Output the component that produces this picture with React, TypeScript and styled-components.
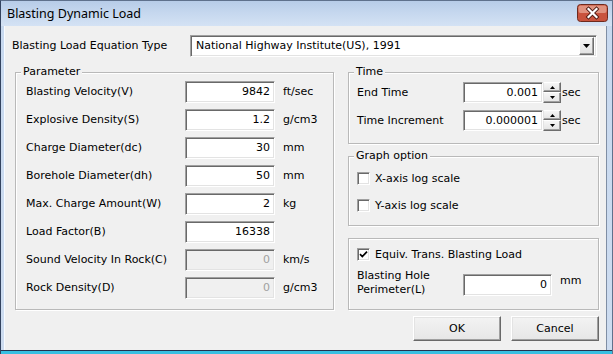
import React from "react";
import styled, { createGlobalStyle } from "styled-components";

const Global = createGlobalStyle`
  html, body { margin: 0; padding: 0; background: #ffffff; }
  body { width: 613px; height: 354px; overflow: hidden; }
  * { box-sizing: border-box; }
`;

const UI_FONT = `"DejaVu Sans", Tahoma, sans-serif`;

const Window = styled.div`
  width: 613px;
  height: 354px;
  display: flex;
  flex-direction: column;
  background: linear-gradient(#bcd0ea 0px, #c8d9ef 30px, #cddcf0 100%);
  border-top: 1px solid #5f718c;
  border-left: 1px solid #33435f;
  border-right: 1px solid #5f718c;
  font-family: ${UI_FONT};
  font-size: 11px;
  color: #000;
`;

const TitleBar = styled.div`
  height: 25px;
  display: flex;
  align-items: flex-start;
  background: linear-gradient(#b7cce8 0%, #c5d7ee 45%, #d4e2f4 100%);
`;

const Title = styled.div`
  flex: 1;
  margin: 5px 0 0 6px;
  font-family: "Noto Sans", "DejaVu Sans", sans-serif;
  font-size: 12.5px;
  line-height: 16px;
  color: #000;
`;

const CloseButton = styled.div`
  flex: none;
  width: 31px;
  height: 18px;
  margin: 3px 4px 0 0;
  display: block;
  line-height: 0;
`;

const Client = styled.div`
  flex: 1;
  margin: 0 5px 0 3px;
  background: #f0f0f0;
  border-left: 1px solid #f8fbff;
  border-right: 1px solid #7f8ea4;
  padding: 9px 7px 0 7px;
  display: flex;
  flex-direction: column;
`;

const BottomEdge = styled.div`
  height: 4px;
  border-top: 1px solid #24334f;
  background: #38bfe1;
`;

const TopRow = styled.div`
  display: grid;
  grid-template-columns: 178px 407px;
  align-items: center;
  height: 22px;
`;

const Label = styled.span`
  white-space: nowrap;
  line-height: 14px;
`;

const Combo = styled.div`
  height: 22px;
  display: flex;
  align-items: center;
  background: #fff;
  border: 1px solid;
  border-color: #a0a0a0 #ffffff #ffffff #a0a0a0;
  box-shadow: inset 1px 1px 0 #696969, inset -1px -1px 0 #e3e3e3;
  padding: 0 2px 0 5px;
`;

const ComboText = styled.span`
  flex: 1;
  line-height: 14px;
  white-space: nowrap;
`;

const ComboArrow = styled.div`
  width: 15px;
  height: 18px;
  display: flex;
  align-items: center;
  justify-content: center;
  background: linear-gradient(#f4f4f4, #e2e2e2);
  border: 1px solid;
  border-color: #ffffff #6d6d6d #6d6d6d #ffffff;
  box-shadow: inset -1px -1px 0 #a0a0a0;
`;

const Main = styled.div`
  margin-top: 15px;
  padding-left: 3px;
  display: flex;
  gap: 14px;
  align-items: flex-start;
`;

const Group = styled.div<{ $w?: number; $h: number }>`
  position: relative;
  width: ${(p) => (p.$w ? `${p.$w}px` : "100%")};
  height: ${(p) => p.$h}px;
  border: 1px solid #b9b9b9;
  box-shadow: inset 1px 1px 0 #ffffff, 1px 1px 0 #ffffff;
`;

const Legend = styled.span`
  position: absolute;
  top: -8px;
  left: 5px;
  padding: 0 2px;
  background: #f0f0f0;
  line-height: 14px;
  white-space: nowrap;
`;

const ParamList = styled.div`
  display: flex;
  flex-direction: column;
  gap: 6px;
  padding: 8px 0 0 10px;
`;

const ParamRow = styled.div`
  display: grid;
  grid-template-columns: 159px 90px auto;
  align-items: center;
  height: 22px;
`;

const Unit = styled.span<{ $ml?: number }>`
  margin-left: ${(p) => p.$ml ?? 8}px;
  line-height: 14px;
  white-space: nowrap;
`;

const Edit = styled.div<{ $w?: number; $h?: number; $disabled?: boolean }>`
  width: ${(p) => p.$w ?? 90}px;
  height: ${(p) => p.$h ?? 22}px;
  background: ${(p) => (p.$disabled ? "#f0f0f0" : "#ffffff")};
  color: ${(p) => (p.$disabled ? "#a0a0a0" : "#000")};
  border: 1px solid;
  border-color: #a0a0a0 #ffffff #ffffff #a0a0a0;
  box-shadow: inset 1px 1px 0 #696969, inset -1px -1px 0 #e3e3e3;
  padding-right: 4px;
  display: flex;
  align-items: center;
  justify-content: flex-end;
  line-height: 14px;
`;

const RightColumn = styled.div`
  width: 251px;
  display: flex;
  flex-direction: column;
  gap: 12px;
`;

const TimeList = styled.div`
  display: flex;
  flex-direction: column;
  gap: 7px;
  padding: 9px 0 0 8px;
`;

const TimeRow = styled.div`
  display: grid;
  grid-template-columns: 106px 80px 18px auto;
  align-items: center;
  height: 21px;
`;

const Spinner = styled.div`
  width: 18px;
  height: 21px;
  display: flex;
  flex-direction: column;
`;

const SpinButton = styled.div<{ $h: number }>`
  height: ${(p) => p.$h}px;
  display: flex;
  align-items: center;
  justify-content: center;
  background: linear-gradient(#f6f6f6, #e4e4e4);
  border: 1px solid;
  border-color: #ffffff #6d6d6d #6d6d6d #e3e3e3;
  box-shadow: inset -1px -1px 0 #a0a0a0;
`;

const CheckList = styled.div`
  display: flex;
  flex-direction: column;
  gap: 14px;
  padding: 15px 0 0 8px;
`;

const CheckRow = styled.div`
  display: flex;
  align-items: center;
  gap: 5px;
  height: 13px;
`;

const CheckBox = styled.div`
  width: 13px;
  height: 13px;
  background: #fff;
  border: 1px solid;
  border-color: #a0a0a0 #ffffff #ffffff #a0a0a0;
  box-shadow: inset 1px 1px 0 #696969, inset -1px -1px 0 #e3e3e3;
  display: flex;
  align-items: center;
  justify-content: center;
`;

const EquivBody = styled.div`
  display: flex;
  flex-direction: column;
  padding: 9px 0 0 8px;
`;

const PerimeterRow = styled.div`
  display: flex;
  align-items: flex-start;
  margin-top: 8px;
`;

const TwoLineLabel = styled.div`
  width: 106px;
  line-height: 14px;
`;

const EditSlot = styled.div`
  margin-top: 5px;
`;

const UnitSlot = styled.div`
  margin-top: 5px;
`;

const ButtonRow = styled.div`
  display: flex;
  justify-content: flex-end;
  gap: 10px;
  margin-top: -6px;
`;

const Button = styled.div`
  width: 88px;
  height: 25px;
  display: flex;
  align-items: center;
  justify-content: center;
  background: linear-gradient(#f3f3f3, #e6e6e6);
  border: 1px solid;
  border-color: #ffffff #696969 #696969 #ffffff;
  box-shadow: inset -1px -1px 0 #a0a0a0, inset 1px 1px 0 #e3e3e3;
  line-height: 14px;
`;

const params: { label: string; value: string; unit?: string; disabled?: boolean }[] = [
  { label: "Blasting Velocity(V)", value: "9842", unit: "ft/sec" },
  { label: "Explosive Density(S)", value: "1.2", unit: "g/cm3" },
  { label: "Charge Diameter(dc)", value: "30", unit: "mm" },
  { label: "Borehole Diameter(dh)", value: "50", unit: "mm" },
  { label: "Max. Charge Amount(W)", value: "2", unit: "kg" },
  { label: "Load Factor(B)", value: "16338" },
  { label: "Sound Velocity In Rock(C)", value: "0", unit: "km/s", disabled: true },
  { label: "Rock Density(D)", value: "0", unit: "g/cm3", disabled: true },
];

const times = [
  { label: "End Time", value: "0.001" },
  { label: "Time Increment", value: "0.000001" },
];

const CloseIcon = () => (
  <svg width="31" height="18" viewBox="0 0 31 18">
    <rect x="0.5" y="0.5" width="30" height="17" rx="3" ry="3" fill="#c9533d" stroke="#6e2a1e" />
    <rect x="1.5" y="1.5" width="28" height="7.5" rx="2" ry="2" fill="#e0927f" />
    <path d="M11.5 5 L19.5 13 M19.5 5 L11.5 13" stroke="#4e1a12" strokeWidth="4" strokeLinecap="square" />
    <path d="M11.5 5 L19.5 13 M19.5 5 L11.5 13" stroke="#ffffff" strokeWidth="2.2" strokeLinecap="square" />
  </svg>
);

const DownArrow = () => (
  <svg width="7" height="4" viewBox="0 0 7 4">
    <path d="M0 0 H7 L3.5 4 Z" fill="#000" />
  </svg>
);

const SpinArrow = ({ up }: { up: boolean }) => (
  <svg width="5" height="3" viewBox="0 0 5 3">
    <path d={up ? "M0 3 H5 L2.5 0 Z" : "M0 0 H5 L2.5 3 Z"} fill="#000" />
  </svg>
);

const Check = () => (
  <svg width="9" height="9" viewBox="0 0 9 9">
    <path d="M1 4.2 L3.3 6.6 L8 1.6" fill="none" stroke="#000" strokeWidth="1.7" />
  </svg>
);

export default function App() {
  return (
    <>
      <Global />
      <Window>
        <TitleBar>
          <Title>Blasting Dynamic Load</Title>
          <CloseButton>
            <CloseIcon />
          </CloseButton>
        </TitleBar>
        <Client>
          <TopRow>
            <Label>Blasting Load Equation Type</Label>
            <Combo>
              <ComboText>National Highway Institute(US), 1991</ComboText>
              <ComboArrow>
                <DownArrow />
              </ComboArrow>
            </Combo>
          </TopRow>
          <Main>
            <Group $w={319} $h={238}>
              <Legend>Parameter</Legend>
              <ParamList>
                {params.map((p) => (
                  <ParamRow key={p.label}>
                    <Label>{p.label}</Label>
                    <Edit $disabled={p.disabled}>{p.value}</Edit>
                    {p.unit ? <Unit>{p.unit}</Unit> : <span />}
                  </ParamRow>
                ))}
              </ParamList>
            </Group>
            <RightColumn>
              <Group $h={72}>
                <Legend>Time</Legend>
                <TimeList>
                  {times.map((t) => (
                    <TimeRow key={t.label}>
                      <Label>{t.label}</Label>
                      <Edit $w={80} $h={21}>{t.value}</Edit>
                      <Spinner>
                        <SpinButton $h={10}>
                          <SpinArrow up />
                        </SpinButton>
                        <SpinButton $h={11}>
                          <SpinArrow up={false} />
                        </SpinButton>
                      </Spinner>
                      <Unit $ml={1}>sec</Unit>
                    </TimeRow>
                  ))}
                </TimeList>
              </Group>
              <Group $h={70}>
                <Legend>Graph option</Legend>
                <CheckList>
                  <CheckRow>
                    <CheckBox />
                    <Label>X-axis log scale</Label>
                  </CheckRow>
                  <CheckRow>
                    <CheckBox />
                    <Label>Y-axis log scale</Label>
                  </CheckRow>
                </CheckList>
              </Group>
              <Group $h={72}>
                <EquivBody>
                  <CheckRow>
                    <CheckBox>
                      <Check />
                    </CheckBox>
                    <Label>Equiv. Trans. Blasting Load</Label>
                  </CheckRow>
                  <PerimeterRow>
                    <TwoLineLabel>
                      Blasting Hole
                      <br />
                      Perimeter(L)
                    </TwoLineLabel>
                    <EditSlot>
                      <Edit $w={89}>0</Edit>
                    </EditSlot>
                    <UnitSlot>
                      <Unit>mm</Unit>
                    </UnitSlot>
                  </PerimeterRow>
                </EquivBody>
              </Group>
              <ButtonRow>
                <Button>OK</Button>
                <Button>Cancel</Button>
              </ButtonRow>
            </RightColumn>
          </Main>
        </Client>
        <BottomEdge />
      </Window>
    </>
  );
}
